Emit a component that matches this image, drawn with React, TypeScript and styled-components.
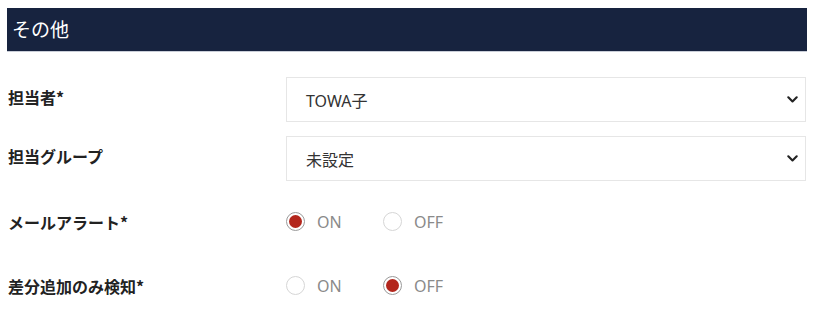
import React, { useState } from "react";
import styled, { createGlobalStyle } from "styled-components";

const GlobalStyle = createGlobalStyle`
  html, body { margin: 0; padding: 0; background: #ffffff; }
  body { font-family: "Noto Sans", "Noto Sans CJK JP", sans-serif; }
`;

const Page = styled.div`
  padding: 8px 18px 0 7px;
  width: 800px;
`;

const SectionHeader = styled.div`
  height: 44px;
  background: #17233f;
  border-bottom: 1px solid #c9ced8;
  box-sizing: border-box;
  display: flex;
  align-items: center;
  padding-left: 5px;
  padding-bottom: 2px;
  color: #ffffff;
  font-family: "Noto Sans CJK JP", sans-serif;
  font-size: 19px;
  font-weight: 400;
`;

const Form = styled.div`
  display: flex;
  flex-direction: column;
  padding-top: 25px;
`;

const Row = styled.div<{ $mt?: number }>`
  display: grid;
  grid-template-columns: 279px 520px;
  align-items: center;
  height: 45px;
  margin-top: ${(p) => p.$mt ?? 0}px;
`;

const Label = styled.div<{ $up?: number }>`
  padding-left: 1px;
  padding-bottom: ${(p) => p.$up ?? 0}px;
  font-family: "Noto Sans CJK JP", sans-serif;
  font-weight: 700;
  font-size: 16px;
  color: #222222;
`;

const SelectBox = styled.div`
  height: 45px;
  box-sizing: border-box;
  border: 1px solid #e6e6e6;
  display: flex;
  align-items: center;
  justify-content: space-between;
  padding: 0 7px 0 19px;
  font-family: "Noto Sans", "Noto Sans CJK JP", sans-serif;
  font-size: 16px;
  color: #333333;
`;

const Chevron = () => (
  <svg width="11" height="7" viewBox="0 0 11 7">
    <path d="M1.3 1.3 L5.5 5.5 L9.7 1.3" fill="none" stroke="#222" strokeWidth="2.1" strokeLinecap="round" strokeLinejoin="round" />
  </svg>
);

const RadioGroup = styled.div`
  display: flex;
  align-items: center;
`;

const RadioOption = styled.label`
  display: flex;
  align-items: center;
  width: 97px;
  cursor: pointer;
  font-family: "Noto Sans", sans-serif;
  font-size: 16px;
  color: #8a8a8a;
`;

const Circle = styled.span<{ $on: boolean }>`
  width: 19px;
  height: 19px;
  box-sizing: border-box;
  border-radius: 50%;
  border: 1px solid ${(p) => (p.$on ? "#9a9a9a" : "#d6d6d6")};
  display: flex;
  align-items: center;
  justify-content: center;
  margin-right: 12px;
  background: #fff;
  &::after {
    content: "";
    width: 13px;
    height: 13px;
    border-radius: 50%;
    background: ${(p) => (p.$on ? "#b3261c" : "transparent")};
  }
`;

const Radio = ({ value, current, onPick }: { value: string; current: string; onPick: (v: string) => void }) => (
  <RadioOption onClick={() => onPick(value)}>
    <Circle $on={current === value} />
    {value}
  </RadioOption>
);

export default function App() {
  const [mail, setMail] = useState("ON");
  const [diff, setDiff] = useState("OFF");
  return (
    <>
      <GlobalStyle />
      <Page>
        <SectionHeader>その他</SectionHeader>
        <Form>
          <Row>
            <Label $up={6}>担当者*</Label>
            <SelectBox>
              <span>TOWA子</span>
              <Chevron />
            </SelectBox>
          </Row>
          <Row $mt={14}>
            <Label $up={6}>担当グループ</Label>
            <SelectBox>
              <span>未設定</span>
              <Chevron />
            </SelectBox>
          </Row>
          <Row $mt={18}>
            <Label>メールアラート*</Label>
            <RadioGroup>
              <Radio value="ON" current={mail} onPick={setMail} />
              <Radio value="OFF" current={mail} onPick={setMail} />
            </RadioGroup>
          </Row>
          <Row $mt={19}>
            <Label>差分追加のみ検知*</Label>
            <RadioGroup>
              <Radio value="ON" current={diff} onPick={setDiff} />
              <Radio value="OFF" current={diff} onPick={setDiff} />
            </RadioGroup>
          </Row>
        </Form>
      </Page>
    </>
  );
}
